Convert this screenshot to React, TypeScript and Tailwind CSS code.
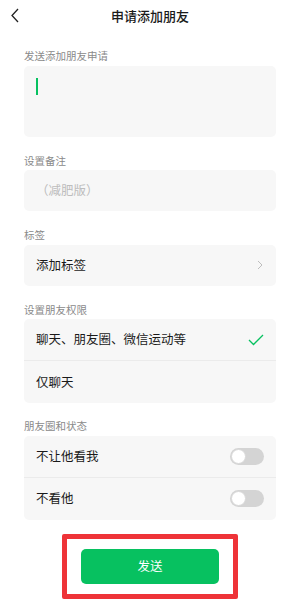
const font = { fontFamily: '"Noto Sans CJK SC", "Noto Sans", sans-serif' };

function Label({ children }: { children: React.ReactNode }) {
  return (
    <div className="mb-[1.5px] h-[16px] px-[24px] text-[10.5px] leading-[16px] text-[#8a8a8a]">
      {children}
    </div>
  );
}

function Toggle() {
  return (
    <div className="relative h-[17px] w-[34px] rounded-full bg-[#d4d4d4]">
      <div className="absolute left-[1px] top-[1px] h-[15px] w-[15px] rounded-full border border-[#d8d8d8] bg-white" />
    </div>
  );
}

export default function App() {
  return (
    <div className="h-[600px] w-[300px] overflow-hidden bg-white" style={font}>
      {/* header */}
      <div className="relative flex h-[32px] items-center justify-center">
        <svg
          className="absolute left-[10px] top-[8px]"
          width="10"
          height="15"
          viewBox="0 0 10 15"
          fill="none"
        >
          <path d="M8 1 L2 7.5 L8 14" stroke="#222" strokeWidth="1.3" />
        </svg>
        <span className="text-[13px] font-medium text-[#1a1a1a]">申请添加朋友</span>
      </div>

      <div className="pt-[16px]">
        <Label>发送添加朋友申请</Label>
        <div className="mx-[24px] h-[71px] rounded-[5px] bg-[#f7f7f7] pl-[12px] pt-[12px]">
          <div className="h-[17px] w-[1.5px] bg-[#07c160]" />
        </div>
      </div>

      <div className="pt-[16px]">
        <Label>设置备注</Label>
        <div className="mx-[24px] flex h-[41px] items-center rounded-[5px] bg-[#f7f7f7] pl-[12px] text-[12.5px] text-[#bdbdbd]">
          （减肥版）
        </div>
      </div>

      <div className="pt-[16px]">
        <Label>标签</Label>
        <div className="mx-[24px] flex h-[41px] items-center justify-between rounded-[5px] bg-[#f7f7f7] pl-[12px] pr-[13px]">
          <span className="text-[12.5px] text-[#1a1a1a]">添加标签</span>
          <svg width="6" height="10" viewBox="0 0 6 10" fill="none">
            <path d="M1 1 L5 5 L1 9" stroke="#bdbdbd" strokeWidth="1" />
          </svg>
        </div>
      </div>

      <div className="pt-[16px]">
        <Label>设置朋友权限</Label>
        <div className="mx-[24px] rounded-[5px] bg-[#f7f7f7]">
          <div className="flex h-[42px] items-center justify-between border-b border-[#ebebeb] pl-[12px] pr-[12px]">
            <span className="text-[12.5px] text-[#1a1a1a]">聊天、朋友圈、微信运动等</span>
            <svg width="16" height="12" viewBox="0 0 16 12" fill="none">
              <path d="M1 6 L5.5 10.5 L15 1" stroke="#07c160" strokeWidth="1.3" />
            </svg>
          </div>
          <div className="flex h-[42px] items-center pl-[12px]">
            <span className="text-[12.5px] text-[#1a1a1a]">仅聊天</span>
          </div>
        </div>
      </div>

      <div className="pt-[15px]">
        <Label>朋友圈和状态</Label>
        <div className="mx-[24px] rounded-[5px] bg-[#f7f7f7]">
          <div className="flex h-[42px] items-center justify-between border-b border-[#ebebeb] pl-[12px] pr-[12px]">
            <span className="text-[12.5px] text-[#1a1a1a]">不让他看我</span>
            <Toggle />
          </div>
          <div className="flex h-[42px] items-center justify-between pl-[12px] pr-[12px]">
            <span className="text-[12.5px] text-[#1a1a1a]">不看他</span>
            <Toggle />
          </div>
        </div>
      </div>

      <div className="flex justify-center pt-[14px]">
        <div className="w-[176px] rounded-[2px] border-[5px] border-[#ee3338] px-[14px] pb-[10px] pt-[10px]">
          <button
            type="button"
            className="flex h-[35px] w-full items-center justify-center rounded-[5px] bg-[#07c160] text-[12.5px] text-white"
          >
            发送
          </button>
        </div>
      </div>
    </div>
  );
}
